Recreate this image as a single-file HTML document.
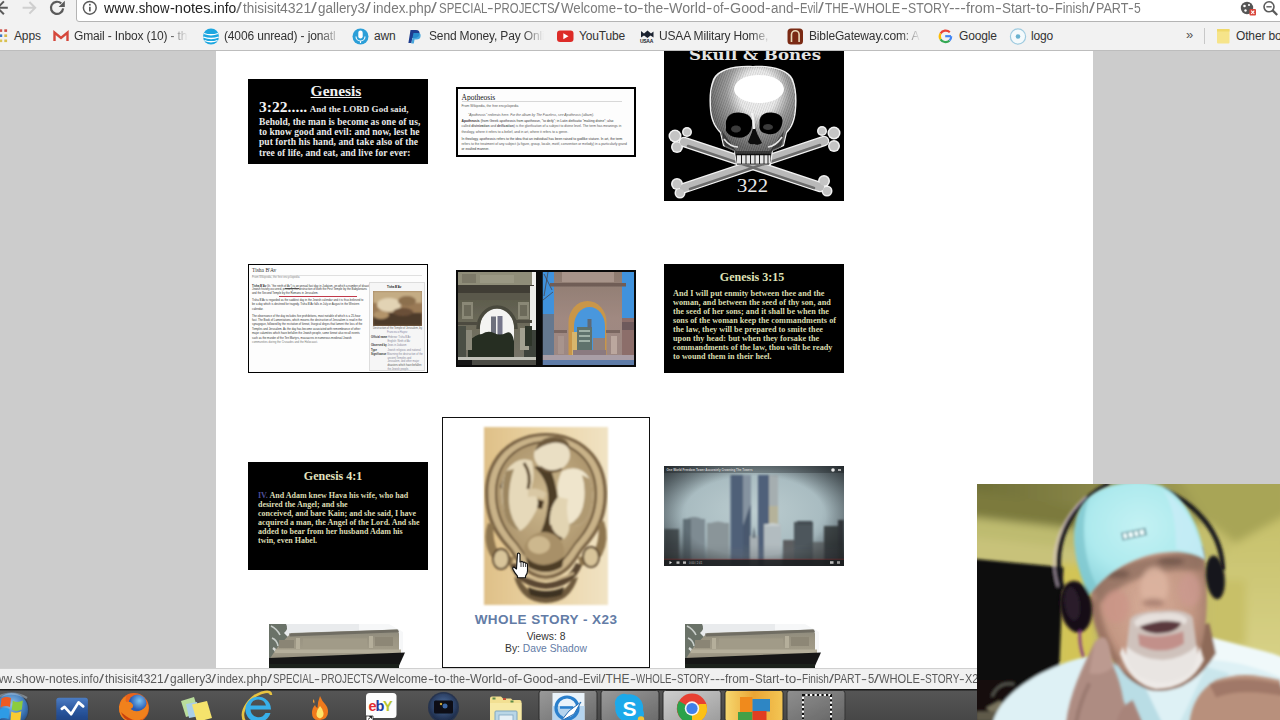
<!DOCTYPE html>
<html><head><meta charset="utf-8"><title>gallery</title>
<style>
*{box-sizing:border-box;margin:0;padding:0}
html,body{width:1280px;height:720px;overflow:hidden;background:#cccccc;font-family:"Liberation Sans",sans-serif}
#root{position:absolute;left:0;top:0;width:1280px;height:720px;overflow:hidden;background:#cccccc}
.abs{position:absolute}
#page{position:absolute;left:216px;top:51px;width:877px;height:640px;background:#fff}
/* chrome toolbar */
#tb{position:absolute;left:0;top:0;width:1280px;height:22px;background:#f2f2f2}
#url{position:absolute;left:76px;top:-6px;width:1220px;height:27.500px;background:#fff;border:1px solid #b4b4b4;border-radius:3px}
#urltxt{position:absolute;left:0;top:-1px;font-size:14px;line-height:18px;color:#7a7a7a}
#urltxt .d{color:#222}
.seg span{position:absolute;top:0;white-space:pre;display:block;transform-origin:0 0}
#bm{position:absolute;left:0;top:22px;width:1280px;height:29px;background:#f2f2f2;border-bottom:1px solid #bdbdbd}
.fade{overflow:hidden;-webkit-mask-image:linear-gradient(90deg,#000 82%,transparent 100%);mask-image:linear-gradient(90deg,#000 82%,transparent 100%)}
.bt{position:absolute;top:28px;font-size:12px;line-height:16px;color:#333;white-space:nowrap;letter-spacing:-0.15px}
/* thumbs */
.thumb{position:absolute;overflow:hidden}
.ser{font-family:"Liberation Serif",serif;font-weight:bold}
.l{font-size:9.500px;line-height:11px;white-space:nowrap;letter-spacing:.05px}
.m{font-size:8.200px;line-height:9px;white-space:nowrap;letter-spacing:.02px}
.n{font-size:8px;letter-spacing:0}
.w{position:absolute;white-space:nowrap;font-size:3.350px;line-height:4px;color:#555;font-family:"Liberation Sans",sans-serif;font-weight:normal}
.v{font-size:2.800px;line-height:3.600px;color:#333}
/* status */
#status{position:absolute;left:0;top:668px;width:980px;height:22px;background:#f1f1f1;border-top:1px solid #d0d0d0}
#status .seg{position:absolute;left:0;top:2.2px;font-size:12px;line-height:16px;color:#5a5a5a}
#task{position:absolute;left:0;top:689px;width:1280px;height:31px;background:#4b4b4b;overflow:hidden}
</style></head>
<body><div id="root">
<div id="page"></div>

<!-- THUMBS -->
<div id="thumbs">
<!-- T1 Genesis 3:22 -->
<div class="thumb ser" style="left:248px;top:79px;width:180px;height:85px;background:#000;color:#e9e9e9" id="t1">
 <div class="abs" style="left:0;top:3px;width:176px;text-align:center;font-size:15.500px;line-height:18px;text-decoration:underline;color:#f2f2f2">Genesis</div>
 <div class="abs l" style="left:11px;top:22px"><span style="font-size:15.500px;color:#f4f4f4">3:22.....</span> <span style="font-size:9px">And the LORD God said,</span></div>
 <div class="abs l" style="left:11px;top:37.500px">Behold, the man is become as one of us,</div>
 <div class="abs l" style="left:11px;top:48px">to know good and evil: and now, lest he</div>
 <div class="abs l" style="left:11px;top:58.300px">put forth his hand, and take also of the</div>
 <div class="abs l" style="left:11px;top:68.800px">tree of life, and eat, and live for ever:</div>
</div>

<!-- T2 Apotheosis -->
<div class="thumb" style="left:456px;top:87px;width:180px;height:70px;background:#fdfdfd;border:2.500px solid #000" id="t2">
 <div class="abs" style="left:3.500px;top:3px;font-family:'Liberation Serif',serif;font-size:7.500px;line-height:9px;color:#111;top:3.800px">Apotheosis</div>
 <div class="abs" style="left:3.500px;top:12.300px;width:160px;height:.5px;background:#d8d8d8"></div>
 <div class="w" style="left:3.500px;top:14.500px">From Wikipedia, the free encyclopedia</div>
 <div class="w" style="left:10px;top:23.500px;font-style:italic">"Apotheosis" redirects here. For the album by The Faceless, see Apotheosis (album).</div>
 <div class="w" style="left:3.500px;top:30px;color:#333"><b>Apotheosis</b> (from Greek apotheosis from apotheoun, "to deify"; in Latin deificatio "making divine"; also</div>
 <div class="w" style="left:3.500px;top:35.300px">called <b>divinization</b> and <b>deification</b>) is the glorification of a subject to divine level. The term has meanings in</div>
 <div class="w" style="left:3.500px;top:40.600px">theology, where it refers to a belief, and in art, where it refers to a genre.</div>
 <div class="w" style="left:3.500px;top:47.500px;color:#333">In theology, apotheosis refers to the idea that an individual has been raised to godlike stature. In art, the term</div>
 <div class="w" style="left:3.500px;top:52.800px">refers to the treatment of any subject (a figure, group, locale, motif, convention or melody) in a particularly grand</div>
 <div class="w" style="left:3.500px;top:58.100px;color:#333">or exalted manner.</div>
</div>
<!-- T4 Tisha B'Av -->
<div class="thumb" style="left:248px;top:264px;width:180px;height:109px;background:#fdfdfd;border:1.500px solid #000" id="t4">
 <div class="abs" style="left:3px;top:2px;font-family:'Liberation Serif',serif;font-size:5.500px;line-height:7px;color:#333">Tisha B'Av</div>
 <div class="abs" style="left:3px;top:9.500px;width:170px;height:.5px;background:#e0e0e0"></div>
 <div class="w v" style="left:3px;top:11px;color:#888">From Wikipedia, the free encyclopedia</div>
 <div class="w v" style="left:3px;top:19.800px"><b>Tisha B'Av</b> (lit. "the ninth of Av") is an annual fast day in Judaism, on which a number of disasters in</div>
 <div class="w v" style="left:3px;top:23.300px">Jewish history occurred, primarily the destruction of both the First Temple by the Babylonians</div>
 <div class="w v" style="left:3px;top:26.800px">and the Second Temple by the Romans in Jerusalem.</div>
 <div class="abs" style="left:30px;top:31.300px;width:78px;height:.6px;background:#c0394a"></div>
 <div class="abs" style="left:36px;top:22.600px;width:14px;height:.5px;background:#555"></div>
 <div class="w v" style="left:3px;top:34.400px">Tisha B'Av is regarded as the saddest day in the Jewish calendar and it is thus believed to</div>
 <div class="w v" style="left:3px;top:38.400px">be a day which is destined for tragedy. Tisha B'Av falls in July or August in the Western</div>
 <div class="w v" style="left:3px;top:43px">calendar.</div>
 <div class="w v" style="left:3px;top:49.700px">The observance of the day includes five prohibitions, most notable of which is a 25-hour</div>
 <div class="w v" style="left:3px;top:54px">fast. The Book of Lamentations, which mourns the destruction of Jerusalem is read in the</div>
 <div class="w v" style="left:3px;top:58.100px">synagogue, followed by the recitation of kinnot, liturgical dirges that lament the loss of the</div>
 <div class="w v" style="left:3px;top:62.700px">Temples and Jerusalem. As the day has become associated with remembrance of other</div>
 <div class="w v" style="left:3px;top:67px">major calamities which have befallen the Jewish people, some kinnot also recall events</div>
 <div class="w v" style="left:3px;top:71.900px">such as the murder of the Ten Martyrs, massacres in numerous medieval Jewish</div>
 <div class="w v" style="left:3px;top:76.200px;color:#777">communities during the Crusades and the Holocaust.</div>
 <div class="abs" style="left:120px;top:17px;width:56px;height:89px;background:#f6f6f6;border:.5px solid #ddd"></div>
 <div class="w v" style="left:138px;top:20.500px;color:#222"><b>Tisha B'Av</b></div>
 <svg class="abs" style="left:124px;top:26px" width="49" height="35" viewBox="0 0 49 35"><defs><filter id="b4"><feGaussianBlur stdDeviation="1.2"/></filter></defs>
  <rect width="49" height="35" fill="#9a7a56"/>
  <g filter="url(#b4)"><rect x="0" y="0" width="49" height="12" fill="#c4ac84"/><ellipse cx="16" cy="14" rx="12" ry="7" fill="#e2d3b4"/><ellipse cx="34" cy="10" rx="9" ry="5" fill="#8c6f4e"/><rect x="0" y="22" width="49" height="13" fill="#4e3b2a"/><ellipse cx="30" cy="21" rx="10" ry="4" fill="#6a4f38"/><ellipse cx="8" cy="24" rx="8" ry="4" fill="#b3946a"/></g>
 </svg>
 <div class="w v" style="left:124px;top:62px;font-size:2.600px;color:#666">Destruction of the Temple of Jerusalem, by</div>
 <div class="w v" style="left:138px;top:65.500px;font-size:2.600px;color:#88a">Francesco Hayez</div>
 <div class="w v" style="left:122px;top:70.500px;font-size:2.600px"><b>Official name</b> <span style="color:#889">Hebrew: Tisha B'Av</span></div>
 <div class="w v" style="left:138.500px;top:74.500px;font-size:2.600px;color:#889">English: Ninth of Av</div>
 <div class="w v" style="left:122px;top:79px;font-size:2.600px"><b>Observed by</b> <span style="color:#889">Jews in Judaism</span></div>
 <div class="w v" style="left:122px;top:83.500px;font-size:2.600px"><b>Type</b> <span style="color:#889;margin-left:10px">Jewish religious and national</span></div>
 <div class="w v" style="left:122px;top:88px;font-size:2.600px"><b>Significance</b> <span style="color:#889">Mourning the destruction of the</span></div>
 <div class="w v" style="left:138.500px;top:91.700px;font-size:2.600px;color:#889">ancient Temples and</div>
 <div class="w v" style="left:138.500px;top:95.400px;font-size:2.600px;color:#889">Jerusalem, and other major</div>
 <div class="w v" style="left:138.500px;top:99.100px;font-size:2.600px;color:#555">disasters which have befallen</div>
 <div class="w v" style="left:138.500px;top:102.800px;font-size:2.600px;color:#889">the Jewish people.</div>
</div>

<!-- T3 Skull & Bones -->
<svg class="abs" style="left:664px;top:21px" width="180" height="180" viewBox="0 0 180 180" id="t3">
 <defs><filter id="b3"><feGaussianBlur stdDeviation=".6"/></filter>
 <radialGradient id="cr" cx=".56" cy=".26" r=".6"><stop offset="0" stop-color="#fff"/><stop offset=".38" stop-color="#f4f4f4"/><stop offset=".62" stop-color="#9a9a9a"/><stop offset="1" stop-color="#5a5a5a"/></radialGradient>
 <pattern id="hat" width="2.200" height="2.200" patternUnits="userSpaceOnUse" patternTransform="rotate(20)"><rect width="2.200" height="2.200" fill="#cfcfcf"/><rect width="1" height="2.200" fill="#3a3a3a"/></pattern>
 </defs>
 <rect width="180" height="180" fill="#000"/>
 <text x="91" y="39" text-anchor="middle" font-family="'DejaVu Serif',serif" font-weight="bold" font-size="15.500" fill="#e4e4e4" textLength="132" lengthAdjust="spacingAndGlyphs">Skull &amp; Bones</text>
 <g filter="url(#b3)">
  <!-- bones -->
  <g stroke="#f2f2f2" stroke-width="10.500" stroke-linecap="round"><path d="M20 121L156 166"/><path d="M20 167L160 120"/></g>
  <g fill="#f2f2f2"><circle cx="11" cy="115" r="6.500"/><circle cx="13" cy="126" r="6"/><circle cx="23" cy="111" r="5"/>
   <circle cx="160" cy="160" r="6"/><circle cx="163" cy="170" r="5.500"/>
   <circle cx="13" cy="163" r="6"/><circle cx="16" cy="172" r="5.500"/>
   <circle cx="170" cy="112" r="6.500"/><circle cx="170" cy="125" r="6"/><circle cx="158" cy="110" r="5"/></g>
  <g stroke="#b9b9b9" stroke-width="8" stroke-linecap="round"><path d="M20 121L156 166"/><path d="M20 167L160 120"/></g>
  <g stroke="#5a5a5a" stroke-width="2.500" stroke-linecap="round" opacity=".8"><path d="M24 125L150 167"/><path d="M26 168L156 124"/></g>
  <g fill="#c4c4c4"><circle cx="11" cy="115" r="5"/><circle cx="13" cy="126" r="4.500"/><circle cx="23" cy="111" r="3.500"/>
   <circle cx="160" cy="160" r="4.500"/><circle cx="163" cy="170" r="4"/>
   <circle cx="13" cy="163" r="4.500"/><circle cx="16" cy="172" r="4"/>
   <circle cx="170" cy="112" r="5"/><circle cx="170" cy="125" r="4.500"/><circle cx="158" cy="110" r="3.500"/></g>
  <!-- skull -->
  <path d="M89 45C108 44 124 48 129 58C133 68 133 80 132 90C131 100 128 107 123 112L120 125L109 130L107 144L72 144L70 130L59 125L56 112C51 107 47 100 46 90C45 80 45 68 49 58C54 48 70 44 89 45Z" fill="#f0f0f0"/>
  <path d="M89 46.500C108 45.500 123 49.500 127.500 59C131.500 68 131.500 80 130.500 90C129.500 99 127 106 122 111L119 124L108 129L106 142.500L73 142.500L71 129L60 124L57 111C52 106 48.500 99 47.500 90C46.500 80 46.500 68 50.500 59C55 49.500 70 45.500 89 46.500Z" fill="url(#hat)"/>
  <path d="M89 46.500C108 45.500 123 49.500 127.500 59C131.500 68 131.500 80 130.500 90C129.500 99 127 106 122 111L119 124L108 129L106 142.500L73 142.500L71 129L60 124L57 111C52 106 48.500 99 47.500 90C46.500 80 46.500 68 50.500 59C55 49.500 70 45.500 89 46.500Z" fill="url(#cr)" opacity=".82"/>
  <ellipse cx="95" cy="68" rx="25" ry="14" fill="#fff"/>
  <path d="M58 110l10 14 4 6h34l4-6 10-14-3 16-10 5-2 13H73l-2-13-10-5z" fill="#1c1c1c" opacity=".6"/>
  <path d="M62 100q2-9 13-8.500t13 8q1 8-3 13t-12 4-11-6.500z" fill="#040404"/>
  <path d="M95.500 99q2-8 12-7.500t11 7.500q0 7-4 11t-11 3-8-6z" fill="#040404"/>
  <ellipse cx="72" cy="108" rx="5" ry="3.500" fill="#3a3a3a"/><ellipse cx="104" cy="106" rx="5" ry="3" fill="#3a3a3a"/>
  <path d="M90 104q-2 8-6 17 2 3 6 2 4 2 8-1-5-8-8-18z" fill="#070707"/>
  <path d="M88 92q2 8 2 16" stroke="#f4f4f4" stroke-width="2.200" fill="none"/>
  <path d="M60 118q6 8 14 8M118 116q-6 9-14 10" stroke="#e4e4e4" stroke-width="1.600" fill="none"/>
  <rect x="73" y="134" width="33" height="8.500" fill="#e6e6e6"/>
  <g stroke="#222" stroke-width="1"><path d="M77.500 134v9M82 134v9M86.500 134v9M91 134v9M95.500 134v9M100 134v9M104 134v9"/></g>
  <path d="M72 133.500h35" stroke="#111" stroke-width="1.500"/>
 </g>
 <text x="88.500" y="170.500" text-anchor="middle" font-family="'Liberation Serif',serif" font-size="18" fill="#e9e9e9" textLength="31" lengthAdjust="spacingAndGlyphs">322</text>
</svg>

<!-- T5 arches -->
<svg class="abs" style="left:456px;top:270px" width="180" height="97" viewBox="0 0 180 97" id="t5">
 <defs><filter id="b5"><feGaussianBlur stdDeviation=".7"/></filter><filter id="b5b"><feGaussianBlur stdDeviation="1.6"/></filter>
 <clipPath id="cl5a"><rect x="2" y="2" width="78" height="93"/></clipPath><clipPath id="cl5b"><rect x="86.500" y="2" width="91.500" height="93"/></clipPath>
 <linearGradient id="stoneL" x1="0" y1="0" x2="0" y2="1"><stop offset="0" stop-color="#7d7b69"/><stop offset=".25" stop-color="#5b5a4b"/><stop offset=".6" stop-color="#6f6d5c"/><stop offset="1" stop-color="#77756a"/></linearGradient>
 <linearGradient id="stoneR" x1="0" y1="0" x2="0" y2="1"><stop offset="0" stop-color="#8e7b70"/><stop offset=".5" stop-color="#a08981"/><stop offset="1" stop-color="#9b8783"/></linearGradient>
 </defs>
 <rect width="180" height="97" fill="#0a0a0a"/>
 <!-- left photo -->
 <g clip-path="url(#cl5a)"><g filter="url(#b5)">
  <rect x="0" y="0" width="82" height="97" fill="#f1f1ee"/>
  <rect x="2" y="2" width="72" height="93" fill="url(#stoneL)"/>
  <rect x="2" y="2" width="74" height="13" fill="#8f8d79"/>
  <rect x="6" y="4" width="14" height="9" fill="#7b7967"/><rect x="24" y="5" width="34" height="8" fill="#9a9884"/>
  <rect x="2" y="15" width="76" height="8" fill="#3f3e34"/>
  <rect x="2" y="23" width="74" height="7" fill="#5a594b"/>
  <rect x="74" y="16" width="8" height="50" fill="#ecece8"/>
  <rect x="68" y="60" width="12" height="30" fill="#3e433a"/>
  <!-- opening -->
  <path d="M24 92V57a17 20 0 0 1 34 0V92z" fill="#f4f4f2"/>
  <path d="M22 59a19 22 0 0 1 38 0" fill="none" stroke="#4a493d" stroke-width="3.500"/>
  <rect x="35" y="46.500" width="5" height="20" fill="#6d6f7c"/><rect x="41.500" y="46" width="5" height="20" fill="#74768a"/>
  <path d="M12 92V72q8-8 14-8 6-4 12-1t12 0 8 8V92z" fill="#262d22"/>
  <rect x="6" y="32" width="11" height="17" fill="#8a8876"/><rect x="62" y="32" width="11" height="17" fill="#8a8876"/>
  <rect x="8" y="35" width="7" height="11" fill="#6c6a5a"/><rect x="64" y="35" width="7" height="11" fill="#6c6a5a"/>
  <rect x="2" y="52" width="20" height="3" fill="#4d4c40"/><rect x="58" y="50" width="18" height="3" fill="#4d4c40"/>
  <rect x="64" y="58" width="9" height="22" fill="#a3a191"/>
  <rect x="69" y="56" width="7" height="20" fill="#2f352b"/>
  <rect x="2" y="56" width="8" height="32" fill="#4b5044"/>
  <rect x="10" y="60" width="6" height="20" fill="#8b897a"/>
  <rect x="2" y="87" width="78" height="3" fill="#c1c1b8"/>
  <rect x="2" y="90" width="78" height="6" fill="#4b4c45"/>
  <rect x="2" y="90" width="14" height="6" fill="#171916"/>
 </g></g>
 <!-- right photo -->
 <g clip-path="url(#cl5b)"><g filter="url(#b5)">
  <rect x="86" y="0" width="94" height="97" fill="#3f92dc"/>
  <rect x="86" y="44" width="12" height="53" fill="#65788f"/>
  <path d="M88 4l8 16M92 2l-4 24M87 30l10-8" stroke="#4a3c3a" stroke-width="1" fill="none" opacity=".7"/>
  <rect x="98" y="2" width="68" height="93" fill="url(#stoneR)"/>
  <rect x="94" y="13" width="76" height="3.500" fill="#6f5d57"/>
  <rect x="106" y="2" width="52" height="10" fill="#a8948a"/>
  <rect x="166" y="48" width="14" height="49" fill="#8c6e6a"/>
  <rect x="166" y="52" width="14" height="8" fill="#6e5a5c"/>
  <!-- opening -->
  <path d="M112.500 92V52a19 21 0 0 1 38 0V92z" fill="#c9964a"/>
  <path d="M118 92V56a15.500 19 0 0 1 31 0V92z" fill="#4a97dd"/>
  <path d="M116 92V62h5.500V92z" fill="#d7b56c"/>
  <rect x="121" y="57" width="15" height="30" fill="#5f726c"/>
  <rect x="123" y="60" width="11" height="2" fill="#9fb0a6"/><rect x="123" y="65" width="11" height="2" fill="#9fb0a6"/><rect x="123" y="70" width="11" height="2" fill="#9fb0a6"/>
  <rect x="131.500" y="49" width="4" height="9" fill="#5d6b78"/>
  <rect x="137" y="68" width="12" height="18" fill="#93817c"/>
  <rect x="117" y="80" width="33" height="12" fill="#8b7a80"/>
  <rect x="150" y="60" width="14" height="3" fill="#7a6660"/><rect x="98" y="60" width="13" height="3" fill="#7a6660"/>
  <rect x="155" y="66" width="6" height="18" fill="#bba79e"/><rect x="102" y="66" width="6" height="18" fill="#a8948d"/>
  <rect x="86" y="85" width="94" height="5" fill="#a99ea6"/>
  <rect x="86" y="90" width="94" height="6" fill="#5f7ba8"/>
 </g></g>
 <rect x="80" y="0" width="6.500" height="97" fill="#0a0a0a"/>
 <rect x=".75" y=".75" width="178.500" height="95.500" fill="none" stroke="#0a0a0a" stroke-width="1.500"/>
</svg>

<!-- T8 selected item -->
<div class="abs" style="left:442px;top:417px;width:208px;height:251px;border:1px solid #111;background:#fff" id="t8box"></div>
<svg class="abs" style="left:482px;top:425px" width="128" height="182" viewBox="-2 -2 128 182" id="t8">
 <defs><filter id="b8" x="-10%" y="-10%" width="120%" height="120%"><feGaussianBlur stdDeviation="1"/></filter><filter id="b8b" x="-10%" y="-10%" width="120%" height="120%"><feGaussianBlur stdDeviation="2.500"/></filter>
 <linearGradient id="sep" x1="0" y1="0" x2="1" y2="0"><stop offset="0" stop-color="#dfc088"/><stop offset=".45" stop-color="#e9d2a2"/><stop offset="1" stop-color="#f1e3c4"/></linearGradient>
 <radialGradient id="wombin" cx=".5" cy=".45" r=".6"><stop offset="0" stop-color="#cdb88e"/><stop offset="1" stop-color="#a89068"/></radialGradient>
 <clipPath id="c8"><rect x="0" y="0" width="124" height="178"/></clipPath></defs>
 <rect x="0" y="0" width="124" height="178" fill="url(#sep)" filter="url(#b8)"/>
 <g clip-path="url(#c8)">
 <g filter="url(#b8)">
  <!-- womb wall -->
  <path d="M62 6C96 6 123 29 123 66C123 96 110 111 99 123C91 134 85 150 62 152C39 150 33 134 25 123C14 111 1 96 1 66C1 29 28 6 62 6Z" fill="#7a6444"/>
  <path d="M62 9C94 9 119.500 31 119.500 66C119.500 94 107 109 96.500 121C89 131 83 146.500 62 148.500C41 146.500 35 131 27.500 121C17 109 4.500 94 4.500 66C4.500 31 30 9 62 9Z" fill="#c9b288"/>
  <path d="M62 14C90 14 113 34 113 66C113 91 102 106 92 117C85 126 80 139 62 141C44 139 39 126 32 117C22 106 11 91 11 66C11 34 34 14 62 14Z" fill="#6a5438"/>
  <path d="M62 16C89 16 111 35 111 66C111 90 100 105 90.500 116C84 125 79 137 62 139C45 137 40 125 33.500 116C24 105 13 90 13 66C13 35 35 16 62 16Z" fill="url(#wombin)"/>
  <!-- dark gaps -->
  <path d="M50 40q16 14 14 36t-10 34l12 4q10-18 8-40t-10-36z" fill="#4e3c26"/>
  <path d="M20 50q14 18 40 24l-2 8q-26-4-42-22z" fill="#4a3824"/>
  <!-- baby top head -->
  <ellipse cx="68" cy="28" rx="18" ry="16" fill="#eadfc4"/>
  <path d="M51 24q4-14 19-14t16 12q-8-8-18-6t-17 8z" fill="#6e5a3c"/>
  <path d="M56 40q10 8 22 2" stroke="#6a5438" stroke-width="2.500" fill="none"/>
  <!-- baby left -->
  <path d="M22 44Q34 28 48 34Q52 50 46 64Q58 70 52 84Q44 100 36 104Q22 100 20 84Q14 62 22 44Z" fill="#e6d9ba"/>
  <path d="M22 44Q16 62 20 84Q22 100 36 104Q26 92 25 76Q24 58 30 42z" fill="#9c8660"/>
  <path d="M40 36q8 12 4 26" stroke="#5a462c" stroke-width="3" fill="none"/>
  <path d="M44 62q10-2 18 4l-2 6q-8-4-16-2z" fill="#d9c8a4"/>
  <!-- baby right -->
  <path d="M78 44Q96 36 106 52Q112 72 104 90Q96 102 84 98Q74 90 76 74Q70 60 78 44Z" fill="#efe5cc"/>
  <path d="M106 52Q112 72 104 90Q96 102 84 98Q98 92 100 74Q102 60 98 48z" fill="#b09a72"/>
  <path d="M74 70Q64 82 66 98Q70 110 80 112Q88 104 84 92Q82 80 84 72Z" fill="#e2d4b2"/>
  <path d="M66 98q2 10 12 14" stroke="#5e4a30" stroke-width="2.500" fill="none"/>
  <!-- bottom head -->
  <ellipse cx="60" cy="124" rx="20" ry="19" fill="#a89068"/>
  <ellipse cx="55" cy="118" rx="11" ry="9" fill="#cdb88e"/>
  <path d="M42 130q16 16 38 0l-2 10q-16 10-34 0z" fill="#4e3c26"/>
  <!-- pelvis -->
  <path d="M4 96Q-2 112 6 128Q14 140 28 138L30 130Q18 130 12 120Q8 108 10 98Z" fill="#8e7650"/>
  <path d="M120 94Q126 112 118 128Q110 140 96 138L94 130Q106 130 112 120Q116 108 114 96Z" fill="#8e7650"/>
  <ellipse cx="17" cy="132" rx="8" ry="10" fill="#d8c49a" stroke="#5e4a30" stroke-width="2"/>
  <ellipse cx="107" cy="130" rx="8" ry="10" fill="#d8c49a" stroke="#5e4a30" stroke-width="2"/>
  <path d="M26 138Q34 160 62 162Q90 160 98 138L92 136Q84 154 62 156Q40 154 32 136Z" fill="#5a4630"/>
  <path d="M30 150Q38 176 62 176Q86 176 94 150L88 152Q80 168 62 168Q44 168 36 152Z" fill="#6e5a3c"/>
  <path d="M44 160q18 8 36 0l-2 8q-16 6-32 0z" fill="#3e3020"/>
  <path d="M34 146q28 14 56 0" stroke="#c9b288" stroke-width="2.500" fill="none"/>
 </g>
 </g>
</svg>
<div class="abs" style="left:442px;top:611.7px;width:208px;text-align:center;font-size:13.500px;line-height:16px;font-weight:bold;color:#637ca6;letter-spacing:.42px;white-space:nowrap" id="t8t">WHOLE STORY - X23</div>
<div class="abs" style="left:442px;top:631px;width:208px;text-align:center;font-size:10.300px;line-height:12px;color:#333;white-space:nowrap">Views: 8</div>
<div class="abs" style="left:442px;top:643px;width:208px;text-align:center;font-size:10.300px;line-height:12px;color:#333;white-space:nowrap">By: <span style="color:#637ca6">Dave Shadow</span></div>
<!-- cursor -->
<svg class="abs" style="left:511px;top:551px" width="22" height="28" viewBox="0 0 22 28" id="cur">
 <path d="M6.500 2.500q1.800-1 2.500 1v7.500l1-.3q1.500-.8 2.200.7 1.500-.8 2.300.8 1.800-.3 2 1.500v6q0 3-2 5.500v1.500h-8v-1.500q-3-3.500-4.500-7-0.800-2 1-2.200l2.500 2z" fill="#fff" stroke="#111" stroke-width="1.100" stroke-linejoin="round"/>
 <path d="M10 11v5M12.300 11.500v4.500M14.600 12.500v3.500" stroke="#111" stroke-width=".8"/>
</svg>

<!-- T9 video -->
<svg class="abs" style="left:664px;top:466px" width="180" height="100" viewBox="0 0 180 100" id="t9">
 <defs><filter id="b9"><feGaussianBlur stdDeviation=".8"/></filter>
 <radialGradient id="sky9" cx=".5" cy=".45" r=".75"><stop offset="0" stop-color="#bccdd0"/><stop offset=".5" stop-color="#a9bcc1"/><stop offset=".82" stop-color="#74848c"/><stop offset="1" stop-color="#454e55"/></radialGradient>
 <radialGradient id="vig9" cx=".5" cy=".5" r=".72"><stop offset=".55" stop-color="#000" stop-opacity="0"/><stop offset="1" stop-color="#000" stop-opacity=".6"/></radialGradient>
 <linearGradient id="haze9" x1="0" y1="0" x2="0" y2="1"><stop offset="0" stop-color="#6a7478" stop-opacity="0"/><stop offset="1" stop-color="#5a6064" stop-opacity=".5"/></linearGradient>
 <clipPath id="c9"><rect width="180" height="100"/></clipPath></defs>
 <g clip-path="url(#c9)">
 <rect width="180" height="100" fill="url(#sky9)"/>
 <g filter="url(#b9)">
  <rect x="0" y="63" width="15" height="37" fill="#4e565a"/>
  <rect x="19" y="53" width="22" height="47" fill="#7e8b92"/><path d="M19 55q11-8 22 0z" fill="#7e8b92"/>
  <rect x="19" y="53" width="8" height="47" fill="#606e76"/>
  <rect x="43" y="57" width="22" height="43" fill="#8a9599"/><path d="M43 59q11-7 22 0z" fill="#8a9599"/>
  <rect x="66.500" y="9" width="20" height="91" fill="#4f6078"/>
  <rect x="79" y="9" width="7.500" height="91" fill="#8593a0"/>
  <path d="M79 60l7.500-22v62h-7.500z" fill="#4a596e"/>
  <rect x="94" y="9" width="20" height="91" fill="#50617a"/>
  <rect x="105" y="9" width="9" height="60" fill="#a5aeb0"/>
  <rect x="105" y="40" width="9" height="18" fill="#b5b29a"/>
  <rect x="100" y="58" width="17" height="42" fill="#b2bcc0"/><path d="M100 60q8.500-6 17 0z" fill="#c7cfd0"/>
  <rect x="86" y="70" width="8" height="30" fill="#a8b0b4"/>
  <path d="M88 72l2-12 2 12z" fill="#6b7780"/>
  <rect x="119" y="74" width="12" height="26" fill="#5b5d60"/>
  <rect x="130" y="56" width="19" height="44" fill="#4e575c"/><rect x="133" y="55" width="15" height="4" fill="#454d52"/>
  <rect x="149" y="76" width="12" height="24" fill="#6b7274"/>
  <rect x="160" y="60" width="14" height="40" fill="#3f464a"/>
  <rect x="174" y="54" width="6" height="46" fill="#3a4044"/>
  <rect x="0" y="78" width="180" height="22" fill="url(#haze9)"/>
 </g>
 <rect width="180" height="100" fill="url(#vig9)"/>
 <rect x="0" y="93.500" width="180" height="6.500" fill="#1b1d20" opacity=".85"/>
 <rect x="0" y="0" width="180" height="7" fill="#15181b" opacity=".3"/>
 <text x="2.500" y="5.300" font-family="'Liberation Sans',sans-serif" font-weight="bold" font-size="3" fill="#cfcfcf">One World Freedom Tower Accurately Crowning The Towers</text>
 <circle cx="169" cy="4" r="1.800" fill="#e8e8e8"/><path d="M174 3.200h3v1.600h-3z" fill="#d0d0d0"/>
 <path d="M5.500 95l2.500 1.600-2.500 1.600z" fill="#e0e0e0"/><rect x="12.500" y="95.400" width="3" height="2.400" fill="#bbb"/><rect x="19" y="95.400" width="3" height="2.400" fill="#bbb"/>
 <text x="25" y="97.800" font-family="'Liberation Sans',sans-serif" font-size="2.800" fill="#bdbdbd">0:00 / 2:41</text>
 <rect x="166" y="95.200" width="3.500" height="2.600" fill="#bbb"/><rect x="173" y="95.200" width="3" height="2.600" fill="#999"/>
 <rect x="0" y="92.800" width="180" height=".7" fill="#b03030" opacity=".5"/>
 </g>
</svg>
<!-- T10, T12 bottom arch tops -->
<svg class="abs" style="left:269px;top:624px" width="138" height="44" viewBox="0 0 138 44" id="t10">
 <defs><filter id="b10"><feGaussianBlur stdDeviation=".7"/></filter>
 <linearGradient id="st10" x1="0" y1="0" x2="0" y2="1"><stop offset="0" stop-color="#8c897c"/><stop offset=".3" stop-color="#9a9482"/><stop offset=".75" stop-color="#a39d8a"/><stop offset="1" stop-color="#8f8a79"/></linearGradient>
 <clipPath id="c10"><rect width="138" height="44"/></clipPath>
 </defs>
 <g clip-path="url(#c10)">
  <rect x="0" y="0" width="138" height="44" fill="#fff"/>
  <g filter="url(#b10)">
  <path d="M0 0h118l14 7v22H0z" fill="#e9ebed"/>
  <path d="M90 0h30l14 8v20h-44z" fill="#f6f7f8"/>
  <path d="M0 0h17q3 5-2 9l5 5-6 6-4 10 4 4H0z" fill="#6b7268"/>
  <path d="M2 2q6 3 9 9M3 14q5 2 6 8" stroke="#c9cfcb" stroke-width="1.600" fill="none"/>
  <path d="M4 24q5 3 3 9" stroke="#d8dcd8" stroke-width="2.500" fill="none"/>
  <path d="M22 9L128 5.500l2 4v19L134 31 0 36 8 24z" fill="url(#st10)"/>
  <path d="M20 9.500L129 5.500l1 2.800L21 12.500z" fill="#6f6d63"/>
  <rect x="27" y="14" width="4" height="11" fill="#b5af9b"/><rect x="100" y="12" width="4" height="12" fill="#b5af9b"/>
  <rect x="34" y="14.500" width="64" height="10" fill="#a19b88"/>
  <rect x="106" y="13" width="18" height="9" fill="#8d8776"/><rect x="10" y="16" width="15" height="8" fill="#8a8575"/>
  <path d="M6 25.500h126v3.500H6z" fill="#b5af9b"/>
  <path d="M0 34L136 28.500 129 44H0z" fill="#151716"/>
  <path d="M0 40h130v4H0z" fill="#1b211f"/>
  </g>
 </g>
</svg>
<svg class="abs" style="left:685px;top:624px" width="138" height="44" viewBox="0 0 138 44" id="t12"><g clip-path="url(#c10)">
  <rect x="0" y="0" width="138" height="44" fill="#fff"/>
  <g filter="url(#b10)">
  <path d="M0 0h118l14 7v22H0z" fill="#e9ebed"/>
  <path d="M90 0h30l14 8v20h-44z" fill="#f6f7f8"/>
  <path d="M0 0h17q3 5-2 9l5 5-6 6-4 10 4 4H0z" fill="#6b7268"/>
  <path d="M2 2q6 3 9 9M3 14q5 2 6 8" stroke="#c9cfcb" stroke-width="1.600" fill="none"/>
  <path d="M4 24q5 3 3 9" stroke="#d8dcd8" stroke-width="2.500" fill="none"/>
  <path d="M22 9L128 5.500l2 4v19L134 31 0 36 8 24z" fill="url(#st10)"/>
  <path d="M20 9.500L129 5.500l1 2.800L21 12.500z" fill="#6f6d63"/>
  <rect x="27" y="14" width="4" height="11" fill="#b5af9b"/><rect x="100" y="12" width="4" height="12" fill="#b5af9b"/>
  <rect x="34" y="14.500" width="64" height="10" fill="#a19b88"/>
  <rect x="106" y="13" width="18" height="9" fill="#8d8776"/><rect x="10" y="16" width="15" height="8" fill="#8a8575"/>
  <path d="M6 25.500h126v3.500H6z" fill="#b5af9b"/>
  <path d="M0 34L136 28.500 129 44H0z" fill="#151716"/>
  <path d="M0 40h130v4H0z" fill="#1b211f"/>
  </g>
 </g></svg>
<!-- T6 Genesis 3:15 -->
<div class="thumb ser" style="left:664px;top:264px;width:180px;height:109px;background:#000;color:#d9dcae" id="t6">
 <div class="abs" style="left:0;top:6px;width:176px;text-align:center;font-size:12px;line-height:14px;color:#dfe2b6">Genesis 3:15</div>
 <div class="abs m" style="left:9px;top:24.500px">And I will put enmity between thee and the</div>
 <div class="abs m" style="left:9px;top:33.600px">woman, and between the seed of thy son, and</div>
 <div class="abs m" style="left:9px;top:42.700px">the seed of her sons; and it shall be when the</div>
 <div class="abs m" style="left:9px;top:51.800px">sons of the woman keep the commandments of</div>
 <div class="abs m" style="left:9px;top:60.900px">the law, they will be prepared to smite thee</div>
 <div class="abs m" style="left:9px;top:70px">upon thy head: but when they forsake the</div>
 <div class="abs m" style="left:9px;top:79.100px">commandments of the law, thou wilt be ready</div>
 <div class="abs m" style="left:9px;top:88.200px">to wound them in their heel.</div>
</div>
<!-- T7 Genesis 4:1 -->
<div class="thumb ser" style="left:248px;top:462px;width:180px;height:108px;background:#000;color:#dcdcb4" id="t7">
 <div class="abs" style="left:0;top:7px;width:170px;text-align:center;font-size:12px;line-height:14px;color:#e3e3bf">Genesis 4:1</div>
 <div class="abs m n"  style="left:10px;top:29px"><span style="color:#4d4d96">IV.</span> And Adam knew Hava his wife, who had</div>
 <div class="abs m n"  style="left:10px;top:38px">desired the Angel; and she</div>
 <div class="abs m n"  style="left:10px;top:47px">conceived, and bare Kain; and she said, I have</div>
 <div class="abs m n"  style="left:10px;top:56px">acquired a man, the Angel of the Lord. And she</div>
 <div class="abs m n"  style="left:10px;top:65px">added to bear from her husband Adam his</div>
 <div class="abs m n"  style="left:10px;top:74px">twin, even Habel.</div>
</div>
</div>

<!-- STATUS + TASKBAR -->
<div id="status"><div class="seg"><span style="left:-5.50px;transform:scaleX(0.995)">ww</span><span style="left:11.75px;transform:scaleX(1.044)">.show</span><span style="left:44.50px;transform:scaleX(1.004)">-notes</span><span style="left:78.00px;transform:scaleX(0.915)">.info</span><span style="left:98.75px;transform:scaleX(1.500)">/</span><span style="left:104.50px;transform:scaleX(0.975)">thisisit</span><span style="left:137.00px;transform:scaleX(1.002)">4321</span><span style="left:163.75px;transform:scaleX(1.500)">/</span><span style="left:169.50px;transform:scaleX(0.993)">gallery3</span><span style="left:211.25px;transform:scaleX(1.500)">/</span><span style="left:216.50px;transform:scaleX(0.924)">index</span><span style="left:243.00px;transform:scaleX(1.027)">.php</span><span style="left:267.00px;transform:scaleX(1.500)">/</span><span style="left:272.50px;transform:scaleX(0.814)">SPECIAL</span><span style="left:313.75px;transform:scaleX(1.500)">-</span><span style="left:320.50px;transform:scaleX(0.812)">PROJECTS</span><span style="left:372.50px;transform:scaleX(1.500)">/</span><span style="left:378.00px;transform:scaleX(0.994)">Welcome</span><span style="left:427.50px;transform:scaleX(1.500)">-</span><span style="left:434.00px;transform:scaleX(1.173)">to</span><span style="left:445.75px;transform:scaleX(0.938)">-</span><span style="left:449.50px;transform:scaleX(0.899)">the</span><span style="left:464.50px;transform:scaleX(1.375)">-</span><span style="left:470.00px;transform:scaleX(1.028)">World</span><span style="left:502.00px;transform:scaleX(1.375)">-</span><span style="left:507.50px;transform:scaleX(0.949)">of</span><span style="left:517.00px;transform:scaleX(1.375)">-</span><span style="left:522.50px;transform:scaleX(1.022)">Good</span><span style="left:552.50px;transform:scaleX(1.375)">-</span><span style="left:558.00px;transform:scaleX(0.973)">and</span><span style="left:577.50px;transform:scaleX(1.375)">-</span><span style="left:583.00px;transform:scaleX(0.931)">Evil</span><span style="left:601.00px;transform:scaleX(1.346)">/</span><span style="left:605.50px;transform:scaleX(1.000)">THE</span><span style="left:629.50px;transform:scaleX(1.500)">-</span><span style="left:635.50px;transform:scaleX(0.807)">WHOLE</span><span style="left:671.00px;transform:scaleX(1.500)">-</span><span style="left:677.00px;transform:scaleX(0.807)">STORY</span><span style="left:710.00px;transform:scaleX(1.250)">---</span><span style="left:725.00px;transform:scaleX(0.990)">from</span><span style="left:748.75px;transform:scaleX(1.438)">-</span><span style="left:754.50px;transform:scaleX(0.957)">Start</span><span style="left:778.75px;transform:scaleX(1.438)">-</span><span style="left:784.50px;transform:scaleX(1.123)">to</span><span style="left:795.75px;transform:scaleX(1.500)">-</span><span style="left:802.00px;transform:scaleX(0.836)">Finish</span><span style="left:828.75px;transform:scaleX(1.500)">/</span><span style="left:834.25px;transform:scaleX(0.866)">PART</span><span style="left:861.00px;transform:scaleX(1.500)">-</span><span style="left:867.50px;transform:scaleX(0.935)">5</span><span style="left:873.75px;transform:scaleX(1.495)">/</span><span style="left:878.75px;transform:scaleX(0.931)">WHOLE</span><span style="left:919.75px;transform:scaleX(1.312)">-</span><span style="left:925.00px;transform:scaleX(0.841)">STORY</span><span style="left:959.40px;transform:scaleX(1.400)">-</span><span style="left:965.00px;transform:scaleX(0.913)">X23</span></div></div>
<div id="task">
<svg class="abs" style="left:0;top:0" width="1280" height="31" viewBox="0 689 1280 31" id="tasksvg">
 <defs>
  <filter id="bt1" x="-20%" y="-20%" width="140%" height="140%"><feGaussianBlur stdDeviation=".5"/></filter>
  <linearGradient id="tbg" x1="0" y1="0" x2="0" y2="1"><stop offset="0" stop-color="#565656"/><stop offset="1" stop-color="#474747"/></linearGradient>
  <linearGradient id="act1" x1="0" y1="0" x2="1" y2="1"><stop offset="0" stop-color="#9a9a9a"/><stop offset="1" stop-color="#6a6a6a"/></linearGradient>
  <linearGradient id="act2" x1="0" y1="0" x2="1" y2="1"><stop offset="0" stop-color="#cfcfcf"/><stop offset="1" stop-color="#9c9c9c"/></linearGradient>
  <linearGradient id="act3" x1="0" y1="0" x2="1" y2="0"><stop offset="0" stop-color="#f6d870"/><stop offset=".5" stop-color="#eaa534"/><stop offset="1" stop-color="#f3c655"/></linearGradient>
  <radialGradient id="orb" cx=".5" cy=".35" r=".7"><stop offset="0" stop-color="#8fc1ea"/><stop offset=".6" stop-color="#3e78b8"/><stop offset="1" stop-color="#1d3f74"/></radialGradient>
  <linearGradient id="chk" x1="0" y1="0" x2="0" y2="1"><stop offset="0" stop-color="#4c7cc2"/><stop offset=".5" stop-color="#2a569e"/><stop offset="1" stop-color="#1b3f7e"/></linearGradient>
  <radialGradient id="ffx" cx=".6" cy=".35" r=".5"><stop offset="0" stop-color="#7cc4f4"/><stop offset="1" stop-color="#2a5cb4"/></radialGradient>
  <radialGradient id="camg" cx=".5" cy=".4" r=".6"><stop offset="0" stop-color="#4c6c9c"/><stop offset="1" stop-color="#1c2a48"/></radialGradient>
 </defs>
 <rect x="0" y="689" width="1280" height="31" fill="url(#tbg)"/>
 <rect x="0" y="689" width="1280" height="1.500" fill="#1a1a1a"/>
 <g filter="url(#bt1)">
 <!-- windows orb -->
 <circle cx="11.700" cy="709.400" r="17.600" fill="#39424e"/>
 <circle cx="11.700" cy="709.400" r="16.300" fill="url(#orb)"/>
 <path d="M-3 698q14-9 30 0" stroke="#b8c8d4" stroke-width="2.500" fill="none" opacity=".45"/>
 <path d="M1.500 698.500q5-2.500 9.500-.5l-1 9q-5-2-9.500.5z" fill="#ee5a24"/>
 <path d="M12.800 700.800q5 2.500 10-.3l-1 9q-5 2.600-10 .300z" fill="#8ccc3c"/>
 <path d="M0 709.500q5-2.500 9.500-.5l-1 10q-5-2-9.500.5z" fill="#2f9be6"/>
 <path d="M11.300 711.500q5 2.500 10-.3l-1 10q-5 2.600-10 .300z" fill="#f8cc30"/>
 <!-- check icon -->
 <rect x="56.300" y="697.700" width="31.600" height="26" rx="2.500" fill="url(#chk)"/>
 <path d="M61.800 708.800l2.700-2 6.600 7.400 7.400-11.800 4.700 4" fill="none" stroke="#fff" stroke-width="2.700" stroke-linejoin="round" stroke-linecap="round"/>
 <!-- firefox -->
 <circle cx="134" cy="708" r="15" fill="#e8641c"/>
 <circle cx="137.500" cy="703.500" r="9" fill="url(#ffx)"/>
 <path d="M119.500 706q1-7 7-10-2 4 0 6 4-1 6 2t-2 5q5 4 11 1 4-2 6-7 3 9-4 15t-16 3-8.500-15z" fill="#f0811e"/>
 <path d="M121 712q2 7 9 9t13-2q-8 3-14-1t-8-6z" fill="#c8400f"/>
 <!-- sticky notes -->
 <path d="M181 701l13-4 5 16-13 4z" fill="#b9dd9c"/>
 <path d="M186 704l11-2 3 14-11 2z" fill="#a9cfe8"/>
 <path d="M192 704.500l15-3.500 5 17-15 4z" fill="#f5e36c"/>
 <!-- IE -->
 <path d="M245 722q-5-8 2-18t18-12q6-1 6 3" stroke="#e8c340" stroke-width="2.600" fill="none"/>
 <path d="M271 709.500h-20.500a8 8 0 0 0 15 3.500h5a12.800 12.800 0 1 1 .500-3.500zM250.500 705.500h15.500a8 8 0 0 0-15.500 0z" fill="#38b0ea"/>
 <!-- flame -->
 <path d="M320 696q2 5 5 8t3 8q0 7-8 8t-8-7q0-5 3-8 1 3 2.500 3 0-6 2.500-12z" fill="#f07a1c"/>
 <path d="M320 706q3 3 3.500 7t-3.500 5.500q-4-1-3.500-5t3.500-7.500z" fill="#fde46a"/>
 <path d="M313.500 699q1.500 2 .8 4.500-2-1-.8-4.500z" fill="#f6a030"/>
 <!-- ebay -->
 <rect x="366" y="693" width="30.500" height="25" rx="3.500" fill="#fdfdfd"/>
 <path d="M366 716h7v5h-7z" fill="#fff" stroke="#222" stroke-width=".8"/>
 <path d="M368 719.500l3.500-3m0 2.200v-2.200h-2.200" stroke="#111" stroke-width=".9" fill="none"/>
 <!-- camera -->
 <circle cx="443.500" cy="707.500" r="15.500" fill="#27344e"/>
 <circle cx="443.500" cy="707.500" r="14" fill="url(#camg)"/>
 <rect x="434" y="700.500" width="19" height="13" rx="1.500" fill="#0b0d12"/>
 <circle cx="445" cy="706" r="2.500" fill="#3d68a8"/><circle cx="441" cy="704" r="1.200" fill="#c9a23a"/>
 <!-- folder -->
 <path d="M490 698.500q0-2 2-2h9l2 2h8l1.500 1.500h7q2 0 2 2V722h-31.500z" fill="#f2df92"/>
 <path d="M490 703h31.500v19H490z" fill="#f7e9a6"/>
 <rect x="492.500" y="697.500" width="3" height="2" fill="#5d8a4a"/><rect x="503" y="698" width="3" height="2" fill="#c0503a"/><rect x="510.500" y="700.500" width="3" height="2" fill="#5d8a4a"/>
 <rect x="495" y="711" width="22" height="10" rx="1" fill="#b9d6e6" stroke="#7fa6c0" stroke-width="1"/>
 <rect x="499" y="715" width="14" height="6" fill="#e6f0f6" stroke="#7fa6c0" stroke-width=".8"/>
 <!-- active buttons -->
 <rect x="539" y="690.500" width="58" height="31" rx="2.500" fill="url(#act1)" stroke="#2e2e2e" stroke-width="1"/>
 <rect x="552.500" y="693" width="32" height="28" fill="#eaf3fa"/>
 <rect x="552.500" y="706" width="32" height="15" fill="#b5d4ee"/>
 <circle cx="567" cy="708" r="11" fill="none" stroke="#2a7fcc" stroke-width="3.200"/>
 <path d="M560 707.500h13" stroke="#2a7fcc" stroke-width="2.500"/>
 <path d="M561 721l8-10 12-9-7 12z" fill="#fff" stroke="#2a6fb4" stroke-width="1"/>
 <rect x="601" y="690.500" width="58" height="31" rx="2.500" fill="url(#act1)" stroke="#2e2e2e" stroke-width="1"/>
 <path d="M615.500 700a9 9 0 0 1 12-5.500 13.500 13.500 0 0 1 15.500 15.500 9 9 0 0 1-12 12 13.500 13.500 0 0 1-15.500-15.500 9 9 0 0 1 0-6.500z" fill="#1fa9ea"/>
 <circle cx="641" cy="719.500" r="3.200" fill="#f2c230"/>
 <rect x="663" y="690.500" width="58" height="31" rx="2.500" fill="url(#act2)" stroke="#2e2e2e" stroke-width="1"/>
 <!-- chrome logo -->
 <circle cx="692" cy="708.500" r="15" fill="#e74133"/>
 <path d="M692 708.500L679 716a15 15 0 0 1 0-15z" fill="#e74133"/>
 <path d="M692 708.500L679 701.100a15 15 0 0 0 13 22.400l7.500-13z" fill="#2ba24c"/>
 <path d="M692 708.500h15a15 15 0 0 1-15 15z" fill="#fbc116"/>
 <path d="M692 708.500L699.500 704H706.300A15 15 0 0 1 692 723.500L699 710z" fill="#fbc116"/>
 <circle cx="692" cy="708.500" r="7.200" fill="#f4f4f4"/>
 <circle cx="692" cy="708.500" r="5.600" fill="#3f7fe8"/>
 <rect x="725" y="690.500" width="58" height="31" rx="2.500" fill="url(#act3)" stroke="#2e2e2e" stroke-width="1"/>
 <rect x="740" y="697" width="12.500" height="16" fill="#f08a1e"/>
 <rect x="752.500" y="699" width="17.500" height="12.500" fill="#2f86c4"/>
 <rect x="738" y="712" width="14.500" height="10" fill="#43a047"/>
 <rect x="752.500" y="711" width="14" height="11" fill="#e03c24"/>
 <rect x="787" y="690.500" width="58" height="31" rx="2.500" fill="url(#act1)" stroke="#2e2e2e" stroke-width="1" opacity=".85"/>
 <rect x="803" y="695" width="28" height="28" fill="none" stroke="#fff" stroke-width="2"/>
 <rect x="803" y="695" width="28" height="28" fill="none" stroke="#111" stroke-width="2" stroke-dasharray="2.300 2.300"/>
 </g>
 <text x="368.500" y="710.500" font-family="'Liberation Sans',sans-serif" font-weight="bold" font-size="14.500" letter-spacing="-1.200"><tspan fill="#e22c32">e</tspan><tspan fill="#243c9c">b</tspan><tspan fill="#b9c631">Y</tspan></text>
 <text x="629.500" y="715.500" text-anchor="middle" font-family="'Liberation Sans',sans-serif" font-weight="bold" font-size="21" fill="#fff">S</text>
</svg>
</div>

<!-- WEBCAM -->
<div id="cam">
<svg class="abs" style="left:976px;top:480px" width="304" height="240" viewBox="0 0 912 720" id="camsvg">
 <defs>
  <filter id="bc1" x="-20%" y="-20%" width="140%" height="140%"><feGaussianBlur stdDeviation="4"/></filter>
  <filter id="bc2" x="-20%" y="-20%" width="140%" height="140%"><feGaussianBlur stdDeviation="12"/></filter>
  <filter id="bc3" x="-20%" y="-20%" width="140%" height="140%"><feGaussianBlur stdDeviation="2.500"/></filter>
  <filter id="bc4" x="-20%" y="-20%" width="140%" height="140%"><feGaussianBlur stdDeviation="8"/></filter>
  <clipPath id="cc"><rect x="3" y="12" width="909" height="708"/></clipPath>
  <linearGradient id="ceil" x1="0" y1="0" x2="1" y2="0"><stop offset="0" stop-color="#6e6e36"/><stop offset=".3" stop-color="#828044"/><stop offset=".65" stop-color="#9c9850"/><stop offset="1" stop-color="#aeaa5a"/></linearGradient>
  <linearGradient id="wallr" x1="0" y1="0" x2="0" y2="1"><stop offset="0" stop-color="#c6c06a"/><stop offset="1" stop-color="#d8d288"/></linearGradient>
  <radialGradient id="beanie" cx=".5" cy=".4" r=".7"><stop offset="0" stop-color="#c4f2f4"/><stop offset=".55" stop-color="#aeeaee"/><stop offset="1" stop-color="#86d0d8"/></radialGradient>
  <radialGradient id="face" cx=".5" cy=".45" r=".62"><stop offset="0" stop-color="#d6ac98"/><stop offset=".6" stop-color="#c49884"/><stop offset="1" stop-color="#94705e"/></radialGradient>
 </defs>
 <g clip-path="url(#cc)">
  <rect x="0" y="0" width="912" height="720" fill="#c4be6c"/>
  <g filter="url(#bc2)">
   <rect x="-20" y="-20" width="960" height="150" fill="url(#ceil)"/>
   <path d="M-20 110L320 150V320H-20z" fill="#bebb70"/>
   <path d="M-20 170L320 210V320H-20z" fill="#c8c27a"/>
   <path d="M-20 30L300 80L320 150L-20 110z" fill="#7c7a3e"/>
   <rect x="245" y="250" width="110" height="320" fill="#d2c456"/>
   <path d="M600 -20H940V100L780 190L690 120z" fill="#a8a556"/>
   <path d="M780 190L940 100V560H700V260z" fill="url(#wallr)"/>
   <rect x="700" y="300" width="110" height="200" fill="#c8c068"/>
  </g>
  <g filter="url(#bc1)">
   <path d="M-10 236L262 262L250 560L120 640L-10 720z" fill="#0b0b09"/>
   <path d="M-10 600H120V730H-10z" fill="#12110d"/>
   <path d="M48 650q18-46 66-38" stroke="#5a5a52" stroke-width="7" fill="none"/>
   <path d="M30 684l40-22 24 14-38 30z" fill="#7a745e"/>
   <rect x="0" y="694" width="70" height="30" fill="#5e5a48"/>
   <!-- shirt -->
   <path d="M50 730C70 640 200 560 330 530L450 560L640 540L700 470C800 500 912 520 930 540V730z" fill="#def1f5"/>
   <path d="M700 470C800 500 912 520 930 540V600C850 560 760 540 700 540z" fill="#f0f9fa"/>
   <path d="M330 530C400 560 420 640 440 730H560C520 650 500 600 470 560z" fill="#a9d4de" opacity=".7"/>
   <path d="M690 560q-50 110-80 170h90q20-90 60-150z" fill="#c4e4ea" opacity=".8"/>
   <!-- neck -->
   <path d="M420 480L700 430L720 520Q640 650 520 630Q440 600 420 540z" fill="#8e6a58"/>
   <!-- headband -->
   <path d="M262 330C220 200 280 70 400 10" stroke="#17121a" stroke-width="13" fill="none"/>
   <path d="M246 320C215 220 250 120 330 50" stroke="#d9c6dc" stroke-width="5" fill="none" opacity=".8"/>
   <path d="M560 30C660 70 740 160 740 270" stroke="#15131a" stroke-width="14" fill="none"/>
   <!-- face -->
   <path d="M345 330C340 420 380 520 440 570C500 625 600 625 650 565C700 480 700 330 680 200L450 180L360 280z" fill="url(#face)"/>
  </g>
  <g filter="url(#bc4)">
   <path d="M350 330q60-110 330-110v50q-200-10-310 100z" fill="#8c6c5e" opacity=".75"/>
   <ellipse cx="535" cy="320" rx="42" ry="58" fill="#dcb4a0" opacity=".9"/>
   <ellipse cx="420" cy="380" rx="40" ry="50" fill="#cc9488" opacity=".7"/>
   <ellipse cx="640" cy="330" rx="34" ry="50" fill="#cc9890" opacity=".7"/>
   <ellipse cx="425" cy="282" rx="36" ry="12" fill="#6e5248" opacity=".8"/>
   <ellipse cx="585" cy="244" rx="40" ry="12" fill="#6e5248" opacity=".8"/>
   <path d="M355 360q10 100 70 190" stroke="#8a6656" stroke-width="26" fill="none" opacity=".6"/>
   <ellipse cx="532" cy="368" rx="34" ry="12" fill="#9a7062" opacity=".7"/>
  </g>
  <g filter="url(#bc1)">
   <!-- goatee -->
   <path d="M462 420Q470 396 552 392Q628 384 650 412L662 500Q668 560 630 588Q560 625 490 590Q440 560 452 500z" fill="#cfc2bc"/>
   <path d="M474 424Q500 398 552 400Q610 392 634 416L630 432Q556 418 480 440z" fill="#e6e0dc"/>
   <path d="M440 500Q470 590 560 604Q640 594 672 500L684 540Q640 628 540 628Q462 612 432 520z" fill="#eeeae7"/>
   <path d="M452 500Q500 540 560 540Q620 536 664 496Q668 560 630 588Q560 625 490 590Q445 560 452 500z" fill="#e9e5e2"/>
   <path d="M492 440Q556 414 616 428Q604 460 540 460Q500 456 492 440z" fill="#5a383c"/>
   <path d="M486 462q60 18 136-8l2 36q-60 40-134 6z" fill="#c2908a"/>
   <!-- beanie -->
   <path d="M340 345C290 250 270 110 340 50C400 0 520 -10 580 30C650 80 680 180 688 240C600 185 430 225 340 345z" fill="url(#beanie)"/>
   <path d="M340 345C290 250 270 110 340 50C312 120 322 240 362 318z" fill="#7cc4cc" opacity=".75"/>
   <path d="M560 30C640 80 670 170 688 240C650 215 620 210 600 208C600 130 590 70 560 30z" fill="#c8ecf6" opacity=".8"/>
   <!-- cups -->
   <ellipse cx="300" cy="380" rx="48" ry="78" fill="#161018" transform="rotate(-8 300 380)"/>
   <ellipse cx="290" cy="370" rx="22" ry="50" fill="#2a1c2c" transform="rotate(-8 300 380)"/>
   <ellipse cx="718" cy="292" rx="28" ry="66" fill="#14121a" transform="rotate(-6 718 292)"/>
   <path d="M312 450q-4 40 10 80" stroke="#7a2c88" stroke-width="7" fill="none"/>
   <!-- hands -->
   <path d="M270 730C280 640 320 560 356 486Q388 452 400 500L412 560Q432 600 442 660L470 730z" fill="#ae8c82"/>
   <path d="M356 486Q388 452 400 500L412 560Q380 590 340 580z" fill="#bc9a90"/>
   <path d="M300 730q10-60 40-120" stroke="#8e6e66" stroke-width="12" fill="none" opacity=".6"/>
   <path d="M640 730Q650 640 720 600Q800 572 912 600L930 730z" fill="#b8907c"/>
   <path d="M700 612Q800 584 912 612L930 650Q800 622 720 652z" fill="#a07868"/>
   <path d="M420 730q10-50 50-70l30 70z" fill="#a8847a"/>
  </g>
  <g filter="url(#bc3)">
   <rect x="436" y="150" width="76" height="24" fill="#8ab4ba" transform="rotate(-12 474 162)"/>
   <g fill="#f4ffff" transform="rotate(-12 474 162)"><rect x="442" y="155" width="10" height="14"/><rect x="458" y="155" width="12" height="14"/><rect x="476" y="155" width="10" height="14"/><rect x="492" y="155" width="12" height="14"/></g>
  </g>
 </g>
</svg>
</div>

<!-- TOOLBAR -->
<div id="tb"><div id="url"></div>
<svg class="abs" style="left:0;top:0" width="1280" height="22" viewBox="0 0 1280 22">
 <g fill="none" stroke="#5a5a5a" stroke-width="2">
  <path d="M-6 7.8H7.8M3.9 1.4l-6.4 6.4 6.4 6.4"/>
 </g>
 <g fill="none" stroke="#cfcfcf" stroke-width="2">
  <path d="M22.6 7.8H35M29.4 2l5.8 5.8-5.800 5.8"/>
 </g>
 <g fill="none" stroke="#5a5a5a" stroke-width="2.2">
  <path d="M61.2 3.4A6.1 6.1 0 1 0 63.1 8.4"/>
 </g>
 <path d="M58.600 6.9h6.2V0.8z" fill="#5a5a5a"/>
 <circle cx="89.8" cy="7.8" r="6.4" fill="none" stroke="#5a5a5a" stroke-width="1.5"/>
 <rect x="89" y="6.8" width="1.7" height="4.6" fill="#5a5a5a"/><rect x="89" y="3.9" width="1.7" height="1.7" fill="#5a5a5a"/>
 <!-- right icons -->
 <circle cx="1247" cy="8" r="6.2" fill="#555"/>
 <circle cx="1244.5" cy="6" r="1.3" fill="#fff"/><circle cx="1249" cy="5" r="1.1" fill="#fff"/><circle cx="1245.5" cy="10.5" r="1.2" fill="#fff"/>
 <rect x="1249.5" y="9" width="6.5" height="6.5" rx="1" fill="#d9453a"/>
 <path d="M1251.2 10.7l3.1 3.1m0-3.1l-3.1 3.1" stroke="#fff" stroke-width="1.1"/>
 <circle cx="1269" cy="6.8" r="5" fill="none" stroke="#5a5a5a" stroke-width="1.6"/>
 <path d="M1266.4 6.8h5.2" stroke="#5a5a5a" stroke-width="1.4"/>
 <path d="M1272.6 10.4l4.6 4.6" stroke="#5a5a5a" stroke-width="2.2"/>
</svg>

<div id="urltxt" class="seg"><span class="d" style="left:104.25px;transform:scaleX(1.013)">www</span><span class="d" style="left:135.00px;transform:scaleX(0.943)">.show</span><span class="d" style="left:169.50px;transform:scaleX(1.041)">-notes</span><span class="d" style="left:210.00px;transform:scaleX(0.992)">.info</span><span style="left:236.25px;transform:scaleX(1.500)">/</span><span style="left:242.50px;transform:scaleX(0.964)">thisisit</span><span style="left:280.00px;transform:scaleX(1.003)">4321</span><span style="left:311.25px;transform:scaleX(1.500)">/</span><span style="left:318.00px;transform:scaleX(0.959)">gallery3</span><span style="left:365.00px;transform:scaleX(1.500)">/</span><span style="left:372.50px;transform:scaleX(0.971)">index</span><span style="left:405.00px;transform:scaleX(0.963)">.php</span><span style="left:431.25px;transform:scaleX(1.500)">/</span><span style="left:438.75px;transform:scaleX(0.819)">SPECIAL</span><span style="left:487.20px;transform:scaleX(1.402)">-</span><span style="left:493.75px;transform:scaleX(0.812)">PROJECTS</span><span style="left:554.40px;transform:scaleX(1.500)">/</span><span style="left:561.25px;transform:scaleX(0.947)">Welcome</span><span style="left:616.25px;transform:scaleX(1.500)">-</span><span style="left:623.75px;transform:scaleX(1.151)">to</span><span style="left:637.20px;transform:scaleX(1.402)">-</span><span style="left:643.75px;transform:scaleX(0.989)">the</span><span style="left:663.00px;transform:scaleX(1.370)">-</span><span style="left:669.40px;transform:scaleX(1.015)">World</span><span style="left:706.25px;transform:scaleX(1.338)">-</span><span style="left:712.50px;transform:scaleX(0.898)">of</span><span style="left:723.00px;transform:scaleX(1.498)">-</span><span style="left:730.00px;transform:scaleX(1.022)">Good</span><span style="left:765.00px;transform:scaleX(1.199)">-</span><span style="left:770.60px;transform:scaleX(0.959)">and</span><span style="left:793.00px;transform:scaleX(1.498)">-</span><span style="left:800.00px;transform:scaleX(0.798)">Evil</span><span style="left:818.00px;transform:scaleX(1.500)">/</span><span style="left:825.00px;transform:scaleX(0.848)">THE</span><span style="left:848.75px;transform:scaleX(1.209)">-</span><span style="left:854.40px;transform:scaleX(0.900)">WHOLE</span><span style="left:900.60px;transform:scaleX(1.477)">-</span><span style="left:907.50px;transform:scaleX(0.878)">STORY</span><span style="left:949.40px;transform:scaleX(1.204)">---</span><span style="left:966.25px;transform:scaleX(1.027)">from</span><span style="left:995.00px;transform:scaleX(1.477)">-</span><span style="left:1001.90px;transform:scaleX(0.960)">Start</span><span style="left:1030.30px;transform:scaleX(1.220)">-</span><span style="left:1036.00px;transform:scaleX(1.061)">to</span><span style="left:1048.40px;transform:scaleX(1.413)">-</span><span style="left:1055.00px;transform:scaleX(0.903)">Finish</span><span style="left:1088.75px;transform:scaleX(1.500)">/</span><span style="left:1095.60px;transform:scaleX(0.899)">PART</span><span style="left:1128.00px;transform:scaleX(1.231)">-</span><span style="left:1133.75px;transform:scaleX(0.866)">5</span></div>
</div>
<div id="bm"></div>
<svg class="abs" style="left:0;top:21px" width="1280" height="30" viewBox="0 21 1280 30">
 <!-- apps grid -->
 <g>
  <rect x="-0.6" y="29.3" width="2.8" height="2.6" fill="#d0544c"/><rect x="4.3" y="29.3" width="2.8" height="2.6" fill="#cc5048"/>
  <rect x="-0.6" y="34.4" width="2.8" height="2.6" fill="#3b78c8"/><rect x="4.3" y="34.4" width="2.8" height="2.6" fill="#d8b848"/>
  <rect x="-0.6" y="39.5" width="2.8" height="2.6" fill="#dcc454"/><rect x="4.3" y="39.5" width="2.8" height="2.6" fill="#d8c050"/>
 </g>
 <!-- gmail M -->
 <path d="M54.5 41V32.5l6.5 5.5 6.500-5.500V41" fill="none" stroke="#d5473b" stroke-width="2.4" stroke-linejoin="miter"/>
 <!-- att globe -->
 <circle cx="211" cy="36.500" r="8" fill="#1da7e0"/>
 <path d="M204 33.500q7 2.500 14 0M203.200 37q8 3 15.600 0M204.500 40.500q6.500 2.500 13 0" stroke="#fff" stroke-width="1.300" fill="none"/>
 <!-- awn mic -->
 <circle cx="360.500" cy="36.500" r="8" fill="#2c9fd8"/>
 <rect x="358.300" y="30.500" width="4.400" height="8" rx="2.200" fill="#fff"/>
 <path d="M356 36.500a4.500 4.500 0 0 0 9 0M360.500 41v2" stroke="#fff" stroke-width="1.100" fill="none"/>
 <!-- paypal P -->
 <path d="M410.500 30h5.500q4 0 3.500 4t-5 4h-2.200l-.9 5h-3z" fill="#1e3d8f"/>
 <path d="M413.500 33h4.500q3 0 2.600 3.200t-4.300 3.300h-1.800l-.7 4h-2.500z" fill="#2a9ad8" opacity=".85"/>
 <!-- youtube -->
 <rect x="557" y="30.500" width="16.500" height="11.500" rx="3" fill="#dd2c28"/>
 <path d="M563.300 33.300v6l5.200-3z" fill="#fff"/>
 <!-- usaa -->
 <path d="M641 31l3 2.500 3.500-3 3.500 3 2.500-2v6l-3-2-3 2.500-3.500-2.500-3 2z" fill="#1b2230"/>
 <!-- biblegateway -->
 <rect x="787.500" y="28.500" width="15.500" height="16" rx="3.500" fill="#7a2a14"/>
 <path d="M791.500 42v-7.500a3.800 3.800 0 0 1 7.600 0V42" fill="none" stroke="#e9d9b8" stroke-width="1.600"/>
 <!-- google G -->
 <path d="M951 36.200h-5.800" stroke="#4285f4" stroke-width="2.200"/>
 <path d="M949.800 32.300a6 6 0 0 0-9.300 1.200" stroke="#ea4335" stroke-width="2.200" fill="none"/>
 <path d="M940.500 33.500a6 6 0 0 0 0 5.800" stroke="#fbbc05" stroke-width="2.200" fill="none"/>
 <path d="M940.500 39.300a6 6 0 0 0 9 1.300" stroke="#34a853" stroke-width="2.200" fill="none"/>
 <path d="M949.500 40.600a6 6 0 0 0 1.700-4.400" stroke="#4285f4" stroke-width="2.200" fill="none"/>
 <!-- logo -->
 <circle cx="1018" cy="36.500" r="7.600" fill="#f4fafc" stroke="#9fcbe0" stroke-width="1.200"/>
 <circle cx="1018" cy="36.500" r="2.300" fill="#6ab2cf"/>
 <!-- separator + folder -->
 <rect x="1204" y="28" width="1" height="16" fill="#c8c8c8"/>
 <rect x="1217" y="29" width="12.500" height="14.500" rx="1" fill="#f6e48a"/>
 <rect x="1217" y="29" width="12.500" height="2.500" fill="#f0d96a"/>
</svg>
<div class="bt" style="left:14px">Apps</div>
<div class="bt fade" style="left:74px;width:114px">Gmail - Inbox (10) - th</div>
<div class="bt fade" style="left:224px;width:117px">(4006 unread) - jonatl</div>
<div class="bt" style="left:374px">awn</div>
<div class="bt fade" style="left:429px;width:115px">Send Money, Pay Onli</div>
<div class="bt" style="left:579px">YouTube</div>
<div class="bt fade" style="left:659px;width:112px">USAA Military Home,</div>
<div class="bt fade" style="left:809px;width:112px">BibleGateway.com: A</div>
<div class="bt" style="left:959px">Google</div>
<div class="bt" style="left:1031px">logo</div>
<div class="bt" style="left:1186px;font-size:13px;top:27px;color:#555">»</div>
<div class="bt" style="left:1236px">Other bookmarks</div>
<div class="abs" style="left:640px;top:38px;font-size:5px;line-height:6px;font-weight:bold;color:#1b2230;letter-spacing:-.3px">USAA</div>

</div></body></html>
